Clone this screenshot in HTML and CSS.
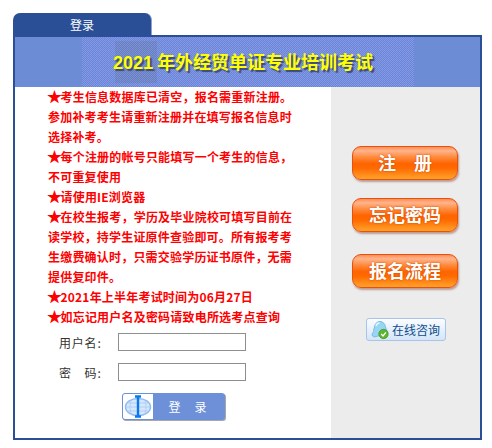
FILE: index.html
```html
<!DOCTYPE html>
<html lang="zh-CN">
<head>
<meta charset="utf-8">
<title>登录</title>
<link rel="stylesheet" href="styles.css">
</head>
<body>
<div class="wrap">
  <div class="tab">登录</div>
  <div class="panel">
    <header class="banner">
      <div class="texture"><h1 class="title"><span class="year">2021</span> 年外经贸单证专业培训考试</h1></div>
    </header>
    <div class="content">
      <main class="left">
        <div class="notice">
          <p><span class="star">★</span>考生信息数据库已清空，报名需重新注册。<br>参加补考考生请重新注册并在填写报名信息时<br>选择补考。</p>
          <p><span class="star">★</span>每个注册的帐号只能填写一个考生的信息，<br>不可重复使用</p>
          <p><span class="star">★</span>请使用IE浏览器</p>
          <p><span class="star">★</span>在校生报考，学历及毕业院校可填写目前在<br>读学校，持学生证原件查验即可。所有报考考<br>生缴费确认时，只需交验学历证书原件，无需<br>提供复印件。</p>
          <p><span class="star">★</span>2021年上半年考试时间为06月27日</p>
          <p><span class="star">★</span>如忘记用户名及密码请致电所选考点查询</p>
        </div>
        <form class="form">
          <label class="row"><span class="label">用户名:</span><input class="input" type="text"></label>
          <label class="row"><span class="label">密&emsp;码:</span><input class="input" type="password"></label>
          <button class="login" type="button">
            <span class="login-icon">
              <svg width="30" height="25" viewBox="0 0 30 25">
                <ellipse cx="15" cy="13" rx="12.500" ry="8.500" fill="#d6e6fb" stroke="#8fbcf2" stroke-width="1.500"/>
                <path d="M3 13h24M8.500 5.500c-2 4.500-2 10.500 0 15M21.500 5.500c2 4.500 2 10.500 0 15M5 9h20M5 17h20" fill="none" stroke="#a9caf5" stroke-width=".8"/>
                <path d="M12 2.500h6M15 2.500v20M12 22.500h6" fill="none" stroke="#0a78ee" stroke-width="2.400"/>
              </svg>
            </span>
            <span class="login-text">登&emsp;录</span>
          </button>
        </form>
      </main>
      <aside class="side">
        <a class="orange">注&emsp;册</a>
        <a class="orange">忘记密码</a>
        <a class="orange">报名流程</a>
        <a class="consult">
          <svg width="19" height="20" viewBox="0 0 19 20">
            <path d="M1.500 16c-1-1 0-3.500 1.200-4.500C2.400 10 2.600 9 3.300 8 3.500 4 6 1.500 9 1.500S14.500 4 14.700 8c1.200 1.500 1.800 4 1 6L3 17z" fill="#96d6f2" stroke="#6db3dc" stroke-width=".8"/>
            <path d="M5 6c.500-2 2-3 3.500-3" fill="none" stroke="#e6f7ff" stroke-width="1.500"/>
            <circle cx="12.500" cy="14" r="4.700" fill="#5cb531" stroke="#3f8f1e" stroke-width=".7"/>
            <path d="M10.200 14l1.800 1.900 2.900-3.500" fill="none" stroke="#fff" stroke-width="1.300"/>
          </svg>
          <span>在线咨询</span>
        </a>
      </aside>
    </div>
  </div>
</div>
</body>
</html>
```
FILE: styles.css
```css
html, body {
  margin: 0;
  padding: 0;
  background: #fff;
}
body {
  font-family: "Noto Sans CJK SC", "Liberation Sans", sans-serif;
  font-size: 12px;
}
.wrap {
  width: 469px;
  padding: 13px 0 0 13px;
}
.tab {
  width: 139px;
  height: 22px;
  box-sizing: border-box;
  background: #2b4f96;
  border-radius: 7px 7px 0 0;
  color: #fff;
  font-size: 12px;
  line-height: 23px;
  text-align: center;
  border-right: 1px solid #8ca3cf;
}
.panel {
  border: 2px solid #2b4f96;
  height: 401px;
  width: 465px;
  display: flex;
  flex-direction: column;
}
.banner {
  height: 50px;
  flex: none;
  background: #6c8dd5;
  padding-left: 67px;
}
.texture {
  width: 332px;
  height: 50px;
  display: flex;
  align-items: center;
  justify-content: center;
  background-color: #7390de;
  background-image:
    linear-gradient(rgba(90, 105, 120, .2), rgba(90, 105, 120, .2)),
    repeating-conic-gradient(rgba(160, 170, 240, .4) 0 25%, rgba(90, 120, 205, .4) 0 50%),
    repeating-conic-gradient(rgba(125, 125, 210, .35) 0 25%, rgba(105, 155, 240, .35) 0 50%);
  background-size: 42px 42px, 2px 2px, 3px 5px;
  background-position: 33px 4px, 0 0, 0 0;
  background-repeat: no-repeat, repeat, repeat;
}
.title {
  margin: 0;
  padding: 0 10px 1px 0;
  font-size: 18px;
  font-weight: 700;
  line-height: 24px;
  color: #ffff00;
  text-shadow: 2px 2px 1px #3c4a78;
  white-space: nowrap;
}
.year {
  font-family: "Liberation Sans", sans-serif;
}
.content {
  flex: 1;
  display: flex;
  min-height: 0;
}
.left {
  width: 316px;
  flex: none;
  padding: 0 0 0 33px;
  box-sizing: border-box;
}
.notice {
  color: #f00;
  font-weight: 700;
  font-size: 12px;
  line-height: 20px;
  letter-spacing: .2px;
  white-space: nowrap;
}
.notice p {
  margin: 0;
}
.star {
  font-size: 15px;
  line-height: 12px;
  letter-spacing: -1.500px;
  margin-left: -1px;
}
.form {
  padding-top: 6px;
  color: #333;
}
.row {
  display: flex;
  align-items: center;
  height: 18px;
  margin-bottom: 12px;
}
.label {
  width: 70px;
  padding-left: 11px;
  box-sizing: border-box;
  font-size: 12px;
  letter-spacing: .8px;
}
.input {
  width: 128px;
  height: 18px;
  box-sizing: border-box;
  margin: 0;
  padding: 0;
  border: 1px solid #8e8e8e;
  background: #fff;
}
.login {
  display: flex;
  width: 103px;
  height: 27px;
  margin: 0 0 0 74px;
  padding: 0;
  box-sizing: border-box;
  border: 1px solid #6d90d8;
  border-radius: 3px;
  background: #6d90d8;
  box-shadow: 1px 1px 0 #a8a8a8;
  overflow: hidden;
}
.login-icon {
  width: 30px;
  height: 25px;
  background: #fff;
  flex: none;
  display: block;
}
.login-text {
  flex: 1;
  color: #fff;
  font-family: "Noto Sans CJK SC", sans-serif;
  font-size: 12px;
  line-height: 25px;
  text-align: center;
  letter-spacing: 1px;
  padding-right: 1px;
}
.side {
  flex: 1;
  background: #ececec;
  padding: 59px 0 0 21px;
  box-sizing: border-box;
}
.orange {
  display: block;
  width: 106px;
  height: 34px;
  margin-bottom: 18px;
  box-sizing: border-box;
  border: 1px solid #e8500c;
  border-radius: 9px;
  background: linear-gradient(#ff8f55 0, #ffb48c 12%, #ff8a3c 32%, #ff6400 52%, #ff6a00 66%, #ffa32c 100%);
  box-shadow: 1px 2px 2px #c09a92;
  color: #fff;
  font-size: 18px;
  font-weight: 700;
  line-height: 31px;
  text-align: center;
  text-shadow: 0 0 2px #c94400;
}
.orange:nth-child(2) {
  margin-bottom: 22px;
}
.orange:nth-child(3) {
  margin-bottom: 30px;
}
.consult {
  display: flex;
  align-items: center;
  gap: 2px;
  width: 80px;
  height: 23px;
  margin-left: 14px;
  padding-left: 4px;
  box-sizing: border-box;
  border: 1px solid #a8c4e6;
  border-radius: 3px;
  background: linear-gradient(#fbfdff, #d4e5f8);
  color: #0d4c8c;
  font-size: 12px;
  white-space: nowrap;
}
```
